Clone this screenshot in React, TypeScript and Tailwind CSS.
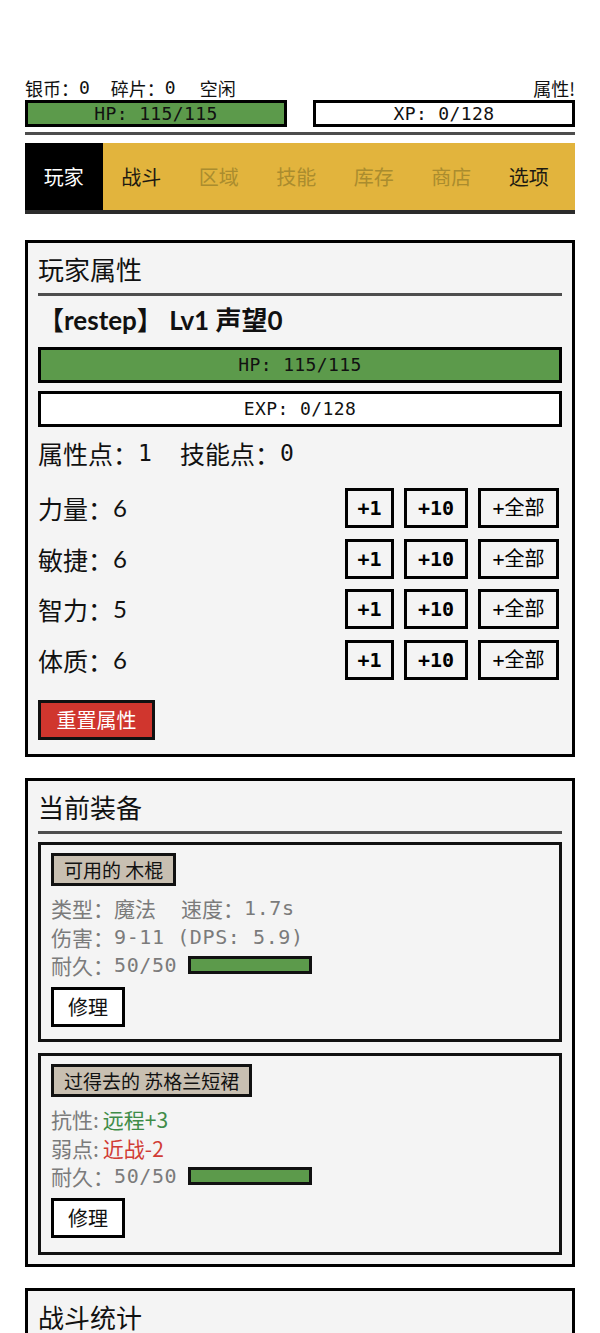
import React from "react";

const mono = "font-['DejaVu_Sans_Mono','Noto_Sans_CJK_SC',monospace]";
const sans = "font-['Noto_Sans_CJK_SC','Noto_Sans',sans-serif]";

function Bar({ label, fill, h }: { label: string; fill?: boolean; h: string }) {
  return (
    <div
      className={`${h} border-[3px] border-black flex items-center justify-center ${mono} text-[18px] tracking-[0.4px] leading-none text-[#111] ${
        fill ? "bg-[#5c9a4b]" : "bg-white"
      }`}
    >
      {label}
    </div>
  );
}

function StatRow({ name, value }: { name: string; value: number }) {
  return (
    <div className="flex items-center justify-between h-[40px]">
      <div className="text-[25px] leading-[30px] text-[#111] flex items-center">
        {name}：<span className="font-['Lato',sans-serif] text-[24px]">{value}</span>
      </div>
      <div className="flex gap-[10px] mr-[3px]">
        <button className={`w-[49px] h-[40px] border-[3px] border-black bg-[#f4f4f4] ${mono} font-bold text-[20px] leading-none`}>+1</button>
        <button className={`w-[64px] h-[40px] border-[3px] border-black bg-[#f4f4f4] ${mono} font-bold text-[20px] leading-none`}>+10</button>
        <button className={`w-[81px] h-[40px] border-[3px] border-black bg-[#f4f4f4] ${mono} text-[20px] leading-none`}>+全部</button>
      </div>
    </div>
  );
}

function Durability() {
  return (
    <div className="flex items-center text-[#7b7b7b]">
      <span>耐久：</span>
      <span className={`${mono} text-[20px] tracking-[0.6px]`}>50/50</span>
      <div className="ml-[11px] w-[124px] h-[18px] border-[3px] border-[#111] bg-[#5c9a4b]" />
    </div>
  );
}

function Repair() {
  return (
    <button className="mt-[7.5px] w-[74px] h-[40px] border-[3px] border-black bg-white text-[20px] text-[#111] leading-none">
      修理
    </button>
  );
}

function ItemLabel({ children }: { children: React.ReactNode }) {
  return (
    <div className="inline-flex items-center h-[33px] px-[10px] border-[3px] border-[#111] bg-[#c8bfb1] text-[19px] leading-none text-[#111]">
      {children}
    </div>
  );
}

function Panel({ title, pb, children }: { title: string; pb: string; children?: React.ReactNode }) {
  return (
    <section className={`border-[3px] border-black bg-[#f4f4f4] px-[10px] pt-[10px] ${pb}`}>
      <h2 className="text-[26px] leading-[32px] text-[#111]">{title}</h2>
      <div className="mt-[8px] h-[3px] bg-[#4d4d4d]" />
      {children}
    </section>
  );
}

export default function App() {
  return (
    <div className={`min-h-[1333px] bg-white px-[25px] pt-[77px] ${sans}`}>
      {/* status line */}
      <div className="flex justify-between text-[18px] leading-[22px] text-[#111]">
        <div className="flex items-center">
          <span>银币：</span>
          <span className={mono}>0</span>
          <span className="ml-[21px]">碎片：</span>
          <span className={mono}>0</span>
          <span className="ml-[24px]">空闲</span>
        </div>
        <div>属性!</div>
      </div>
      <div className="grid grid-cols-2 gap-[26px] mt-[1px]">
        <Bar label="HP: 115/115" fill h="h-[27px]" />
        <Bar label="XP: 0/128" h="h-[27px]" />
      </div>
      <div className="mt-[5px] h-[3px] bg-[#4d4d4d]" />

      {/* navigation */}
      <nav className="mt-[8px] flex h-[71px] bg-[#e2b43d] border-b-[4px] border-[#2b2b2b] text-[20px]">
        {[
          { t: "玩家", c: "bg-black text-white" },
          { t: "战斗", c: "text-[#1d1a12]" },
          { t: "区域", c: "text-[#aa8c2e]" },
          { t: "技能", c: "text-[#aa8c2e]" },
          { t: "库存", c: "text-[#aa8c2e]" },
          { t: "商店", c: "text-[#aa8c2e]" },
          { t: "选项", c: "text-[#1d1a12]" },
        ].map((tab) => (
          <div key={tab.t} className={`w-[77.5px] flex items-center justify-center ${tab.c}`}>
            {tab.t}
          </div>
        ))}
      </nav>

      <div className="mt-[26px] flex flex-col gap-[21px]">
        <Panel title="玩家属性" pb="pb-[14px]">
          <div className="mt-[8px] text-[26px] leading-[32px] font-bold text-[#111] font-['Lato','Noto_Sans_CJK_SC',sans-serif]">
            【restep】 Lv1 声望0
          </div>
          <div className="mt-[11px] flex flex-col gap-[8px]">
            <Bar label="HP: 115/115" fill h="h-[36px]" />
            <Bar label="EXP: 0/128" h="h-[36px]" />
          </div>
          <div className="mt-[11px] flex items-center text-[25px] leading-[30px] text-[#111]">
            <span>属性点：</span>
            <span className={`${mono} text-[23px]`}>1</span>
            <span className="ml-[28px]">技能点：</span>
            <span className={`${mono} text-[23px]`}>0</span>
          </div>
          <div className="mt-[20px] flex flex-col gap-[10.5px]">
            <StatRow name="力量" value={6} />
            <StatRow name="敏捷" value={6} />
            <StatRow name="智力" value={5} />
            <StatRow name="体质" value={6} />
          </div>
          <button className="mt-[20.5px] w-[117px] h-[40px] border-[3px] border-[#111] bg-[#d0362e] text-white text-[20px] leading-none">
            重置属性
          </button>
        </Panel>

        <Panel title="当前装备" pb="pb-[9px]">
          <div className="mt-[8px] flex flex-col gap-[11px] text-[21px] leading-[28.5px]">
            <div className="border-[3px] border-[#111] px-[10px] pt-[8px] pb-[12px]">
              <ItemLabel>可用的 木棍</ItemLabel>
              <div className="mt-[8px] flex items-center text-[#7b7b7b]">
                <span>类型：魔法</span>
                <span className="ml-[25px]">速度：</span>
                <span className={`${mono} text-[20px] tracking-[0.6px]`}>1.7s</span>
              </div>
              <div className="flex items-center text-[#7b7b7b]">
                <span>伤害：</span>
                <span className={`${mono} text-[20px] tracking-[0.6px] whitespace-pre`}>9-11 (DPS: 5.9)</span>
              </div>
              <Durability />
              <Repair />
            </div>
            <div className="border-[3px] border-[#111] px-[10px] pt-[8px] pb-[14px]">
              <ItemLabel>过得去的 苏格兰短裙</ItemLabel>
              <div className="mt-[8px] text-[#7b7b7b]">
                抗性:<span className="ml-[4px] text-[#3f8c48]">远程+3</span>
              </div>
              <div className="text-[#7b7b7b]">
                弱点:<span className="ml-[4px] text-[#d13c35]">近战-2</span>
              </div>
              <Durability />
              <Repair />
            </div>
          </div>
        </Panel>

        <Panel title="战斗统计" pb="pb-[14px]">
          <div className="h-[200px]" />
        </Panel>
      </div>
    </div>
  );
}
